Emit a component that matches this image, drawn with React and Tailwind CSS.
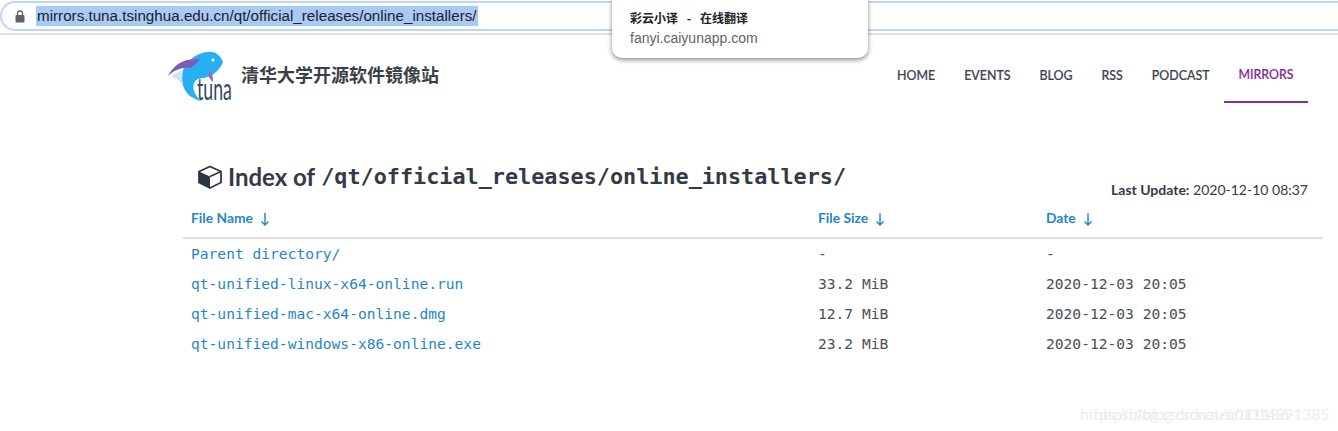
import React from 'react';

const NAV = ['HOME', 'EVENTS', 'BLOG', 'RSS', 'PODCAST'];

const FILES = [
  { name: 'Parent directory/', size: '-', date: '-' },
  { name: 'qt-unified-linux-x64-online.run', size: '33.2 MiB', date: '2020-12-03 20:05' },
  { name: 'qt-unified-mac-x64-online.dmg', size: '12.7 MiB', date: '2020-12-03 20:05' },
  { name: 'qt-unified-windows-x86-online.exe', size: '23.2 MiB', date: '2020-12-03 20:05' },
];

const TunaLogo = () => (
  <svg width="68" height="56" viewBox="0 0 68 56" className="shrink-0">
    <path d="M56 11 C53 3 47 0 40 1 C30 2 23 8 18 15 C14 21 14 30 17 37 C20 44 26 48 34 50 C28 44 25 38 27 32 C29 28 33 27 37 27 C46 25 53 19 56 11 Z" fill="#29b0f4" />
    <path d="M5 26 C8 22 12 20 16 19 C15 24 15 30 16 36 C14 31 10 27 5 26 Z" fill="#cfe6ee" />
    <path d="M1 25 C5 17 12 11 20 9 C25 8 30 8 33 8 C30 12 27 15 23 17 C17 16 8 18 1 25 Z" fill="#7f5bb5" />
    <path d="M44 20 C46 24 46 28 46 31 C44 29 42 27 41 24 Z" fill="#9a6cc0" />
    <circle cx="46" cy="9" r="1.5" fill="#ffffff" />
    <text transform="translate(30 49) scale(0.59 1)" fontSize="30" fill="#2c4a63" style={{ fontFamily: '"Lato", sans-serif' }}>tuna</text>
  </svg>
);

const BoxIcon = () => (
  <svg width="24" height="24" viewBox="0 0 24 24" className="shrink-0">
    <path d="M12 1.5 L23 6.5 L23 17.5 L12 23 L1 17.5 L1 6.5 Z" fill="#ffffff" stroke="#2f3542" strokeWidth="1.8" strokeLinejoin="round" />
    <path d="M1 6.5 L12 11.5 L12 23 L1 17.5 Z" fill="#2f3542" />
    <path d="M12 11.5 L23 6.5" stroke="#2f3542" strokeWidth="1.8" />
  </svg>
);

const LockIcon = () => (
  <svg width="10" height="13" viewBox="0 0 10 13" className="shrink-0">
    <path d="M2.5 6 V3.5 a2.5 2.5 0 0 1 5 0 V6" fill="none" stroke="#5f6368" strokeWidth="1.3" />
    <rect x="0.5" y="5" width="9" height="7.5" rx="1" fill="#5f6368" />
  </svg>
);

const SortArrow = () => (
  <svg width="10" height="14" viewBox="0 0 10 14" className="shrink-0">
    <path d="M5 1 V13 M1.5 9.5 L5 13 L8.5 9.5" fill="none" stroke="#1f86c8" strokeWidth="1.4" />
  </svg>
);

const SortHead = ({ label }) => (
  <div className="flex items-center gap-[7px] text-[#1f86c8] text-[13.8px] font-bold">
    {label}
    <SortArrow />
  </div>
);

export default function App() {
  return (
    <div className="relative h-[431px] w-[1338px] overflow-hidden bg-white text-[#333a45] [font-family:Lato,'Noto_Sans_CJK_SC',sans-serif]">
      {/* browser address bar */}
      <div className="h-[35px] border-b-2 border-[#dfe1e5] pt-px">
        <div className="flex h-[30px] items-center rounded-l-[15px] border-2 border-r-0 border-[#bcd6f5] pl-[13px]">
          <LockIcon />
          <span className="ml-[11px] bg-[#a9c9f7] px-px text-[15.2px] leading-[20px] text-[#202124] [font-family:'Liberation_Sans',sans-serif]">
            mirrors.tuna.tsinghua.edu.cn/qt/official_releases/online_installers/
          </span>
        </div>
      </div>

      {/* history popup */}
      <div className="absolute left-[612px] top-0 h-[58px] w-[256px] rounded-b-[10px] bg-white pl-[18px] pt-[9px] shadow-[0_2px_5px_rgba(0,0,0,0.45)]">
        <div className="text-[12px] font-bold leading-[18px] text-[#202124] [word-spacing:6px] [font-family:'Noto_Sans_CJK_SC',sans-serif]">彩云小译 - 在线翻译</div>
        <div className="mt-[3px] text-[14px] leading-[16px] text-[#5f6368] [font-family:'Liberation_Sans',sans-serif]">fanyi.caiyunapp.com</div>
      </div>

      {/* site header */}
      <header className="flex h-[68px] items-start justify-between pl-[167px] pr-[30px]">
        <div className="flex items-start gap-[6px] pt-[16px]">
          <TunaLogo />
          <h2 className="mt-[10px] text-[18px] font-bold leading-[26px] text-[#3a4048] [font-family:'Noto_Sans_CJK_SC',sans-serif]">清华大学开源软件镜像站</h2>
        </div>
        <nav className="flex text-[12.4px] font-medium leading-[18px] [-webkit-text-stroke:0.2px]">
          {NAV.map((item) => (
            <a key={item} className="flex h-[68px] items-center px-[14.5px] pt-[14px] text-[#3d4450]">{item}</a>
          ))}
          <a className="flex h-[68px] w-[84px] items-center justify-center border-b-2 border-[#852d91] pt-[14px] text-[#852d91]">MIRRORS</a>
        </nav>
      </header>

      {/* index */}
      <main className="ml-[183px] mr-[15px] mt-[59px]">
        <div className="flex items-end justify-between pl-[15px] pr-[15px]">
          <h1 className="mb-[7px] flex items-center text-[24px] font-bold leading-[30px] text-[#333a45]">
            <BoxIcon />
            <span className="ml-[6px]">Index of</span>
            <code className="ml-[6px] text-[21.8px] font-bold [font-family:'DejaVu_Sans_Mono',monospace]">/qt/official_releases/online_installers/</code>
          </h1>
          <div className="text-[14px] leading-[18px]"><b>Last Update:</b> 2020-12-10 08:37</div>
        </div>

        <div className="mt-[5px] grid h-[35px] grid-cols-[627px_228px_1fr] items-center border-b-2 border-[#dddddd] pb-[4px] pl-[8px]">
          <SortHead label="File Name" />
          <SortHead label="File Size" />
          <SortHead label="Date" />
        </div>

        <div className="text-[14.6px] [font-family:'DejaVu_Sans_Mono',monospace]">
          {FILES.map((file) => (
            <div key={file.name} className="grid h-[30px] grid-cols-[627px_228px_1fr] items-center pl-[8px]">
              <a className="text-[#1f86c8]">{file.name}</a>
              <span className="text-[#4a4f57]">{file.size}</span>
              <span className="text-[#4a4f57]">{file.date}</span>
            </div>
          ))}
        </div>
      </main>

      {/* doubled csdn watermark */}
      <span className="absolute left-[1080px] top-[403px] text-[15.5px] text-[#ededed]">https://blog.csdn.net/u011186</span>
      <span className="absolute left-[1094px] top-[403px] text-[15.5px] text-[#ededed]">https://blog.csdn.net/u014591385</span>
    </div>
  );
}
